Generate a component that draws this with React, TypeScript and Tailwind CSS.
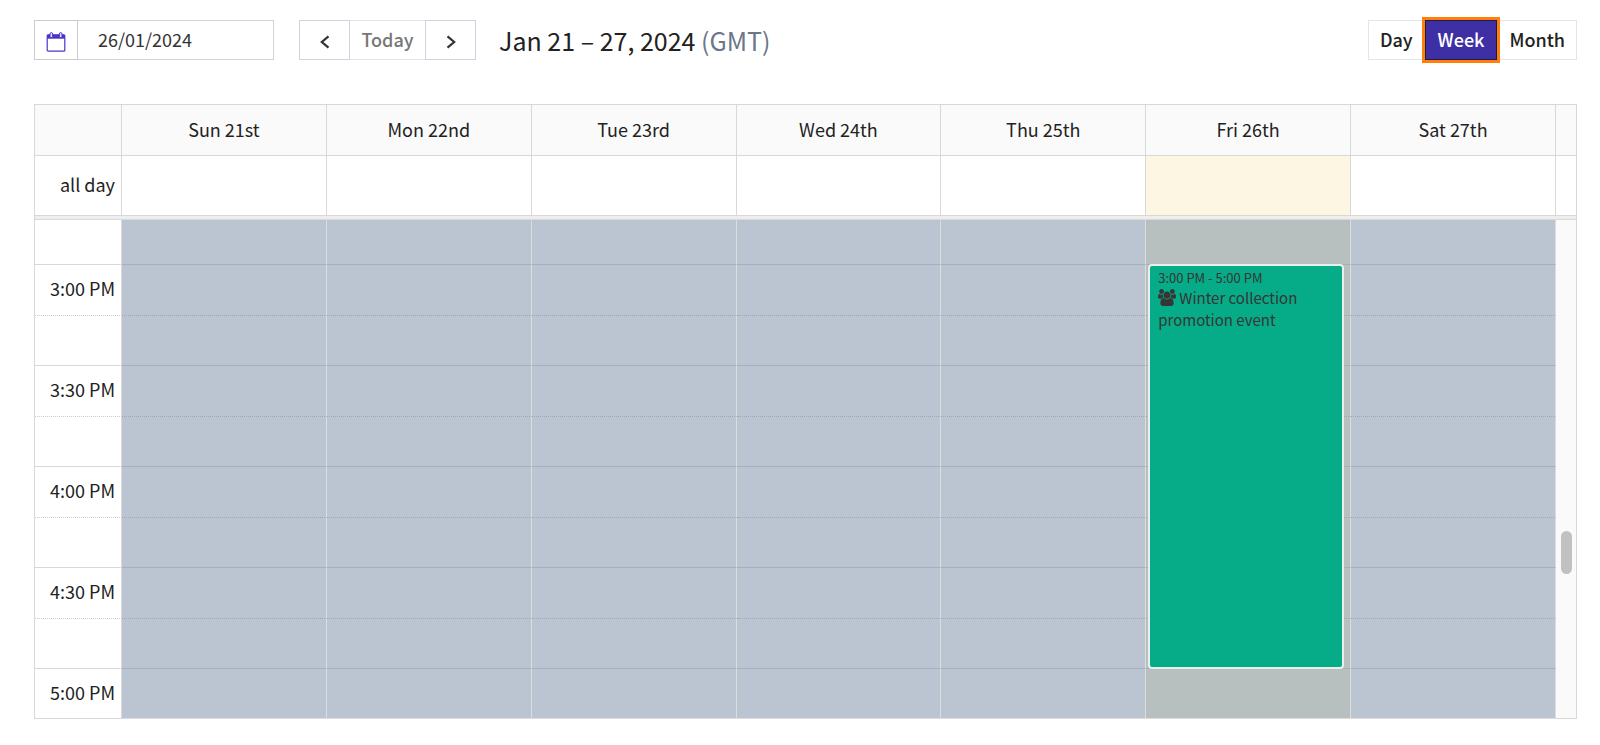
import React, { useState } from 'react';

type View = 'Day' | 'Week' | 'Month';

const views: View[] = ['Day', 'Week', 'Month'];

const days = [
  { label: 'Sun 21st', today: false },
  { label: 'Mon 22nd', today: false },
  { label: 'Tue 23rd', today: false },
  { label: 'Wed 24th', today: false },
  { label: 'Thu 25th', today: false },
  { label: 'Fri 26th', today: true },
  { label: 'Sat 27th', today: false },
];

const times = ['3:00 PM', '3:30 PM', '4:00 PM', '4:30 PM'];

const CalendarIcon = () => (
  <svg viewBox="0 0 20 20" className="mt-1 size-5" fill="none" stroke="currentColor" aria-hidden="true">
    <rect x="1.2" y="2.8" width="17.6" height="16.4" rx="1" strokeWidth="1.2" />
    <path d="M1.2 2.8h17.6v3.9H1.2z" fill="currentColor" stroke="none" />
    <rect x="4" y="0.6" width="2.600" height="5" rx="1.300" fill="#e4e1fa" strokeWidth="1" />
    <rect x="13.400" y="0.600" width="2.600" height="5" rx="1.300" fill="#e4e1fa" strokeWidth="1" />
  </svg>
);

const ChevronIcon = ({ direction }: { direction: 'left' | 'right' }) => (
  <svg viewBox="0 0 12 14" className="mt-[3px] h-3.5 w-3" fill="none" stroke="currentColor" strokeWidth="2.2" aria-hidden="true">
    <path d={direction === 'left' ? 'M9.500 1.300 2.800 7l6.700 5.700' : 'M2.500 1.300 9.200 7l-6.700 5.700'} />
  </svg>
);

const UsersIcon = () => (
  <svg viewBox="0 0 1920 1792" className="mr-[3px] inline-block h-[17px] w-[18px] align-[-2px]" fill="currentColor" aria-hidden="true">
    <path d="M593 896q-162 5-265 128h-134q-82 0-138-40.5t-56-118.5q0-353 124-353 6 0 43.5 21t97.5 42.5 119 21.5q67 0 133-23-5 37-5 66 0 139 81 256zm1071 637q0 120-73 189.5t-194 69.5h-874q-121 0-194-69.5t-73-189.5q0-53 3.5-103.5t14-109 26.5-108.5 43-97.5 62-81 85.5-53.5 111.5-20q10 0 43 21.5t73 48 107 48 135 21.5 135-21.5 107-48 73-48 43-21.5q61 0 111.5 20t85.5 53.5 62 81 43 97.5 26.5 108.5 14 109 3.5 103.5zm-1024-1277q0 106-75 181t-181 75-181-75-75-181 75-181 181-75 181 75 75 181zm704 384q0 159-112.5 271.5t-271.5 112.5-271.5-112.5-112.5-271.5 112.5-271.5 271.5-112.5 271.5 112.5 112.5 271.5zm576 225q0 78-56 118.5t-138 40.5h-134q-103-123-265-128 81-117 81-256 0-29-5-66 66 23 133 23 59 0 119-21.5t97.5-42.5 43.5-21q124 0 124 353zm-128-609q0 106-75 181t-181 75-181-75-75-181 75-181 181-75 181 75 75 181z" />
  </svg>
);

const EventCard = () => (
  <button
    type="button"
    className="absolute -top-px right-[6px] left-[2px] flex h-[405px] flex-col items-start rounded-[4px] border-2 border-[#e8efed] bg-[#06ab87] px-2 pt-[3px] text-left text-[#363636]"
  >
    <span className="text-[13px] leading-[18px]">3:00 PM - 5:00 PM</span>
    <span className="text-[15px] leading-[22px]">
      <UsersIcon />
      Winter collection promotion event
    </span>
  </button>
);

type SlotCellsProps = { dotted?: boolean; withEvent?: boolean; last?: boolean };

const SlotCells = ({ dotted = false, withEvent = false, last = false }: SlotCellsProps) => (
  <>
    {days.map((day) => (
      <td
        key={day.label}
        className={`border-r border-b border-r-[#ddd] p-0 ${withEvent && day.today ? 'relative z-10' : ''} ${
          dotted ? 'border-b-[#9aa8b7] [border-bottom-style:dotted]' : last ? 'border-b-[#ddd]' : 'border-b-[#a3b0be]'
        } ${day.today ? 'bg-[#b7c0be]' : 'bg-[#bac5d1]'}`}
      >
        {withEvent && day.today && <EventCard />}
      </td>
    ))}
  </>
);

const App: React.FC = () => {
  const [view, setView] = useState<View>('Week');
  const [date, setDate] = useState<string>('26/01/2024');

  return (
    <main className="bg-white pt-5 pr-[23px] pb-6 pl-[34px] font-['Noto_Sans_CJK_JP','Noto_Sans_CJK_SC',sans-serif] text-lg text-[#222]">
      {/* Toolbar */}
      <div className="flex h-10 items-stretch">
        <div className="flex w-60">
          <button
            type="button"
            aria-label="Open calendar"
            className="flex w-11 items-center justify-center border border-[#ccc] text-[#4a35c8]"
          >
            <CalendarIcon />
          </button>
          <input
            type="text"
            aria-label="Date"
            value={date}
            onChange={(e) => setDate(e.target.value)}
            className="min-w-0 flex-1 border border-l-0 border-[#cdd3df] px-5 pb-0.5 text-lg leading-6 text-[#333]"
          />
        </div>

        <div className="ml-[25px] flex">
          <button
            type="button"
            aria-label="Previous week"
            className="flex w-[51px] items-center justify-center border border-[#cdd3df] text-[#333]"
          >
            <ChevronIcon direction="left" />
          </button>
          <button type="button" className="w-[75px] border-y border-[#e2e5ec] pb-0.5 text-lg leading-6 font-medium text-[#777]">
            Today
          </button>
          <button
            type="button"
            aria-label="Next week"
            className="flex w-[51px] items-center justify-center border border-[#cdd3df] text-[#333]"
          >
            <ChevronIcon direction="right" />
          </button>
        </div>

        <h1 className="ml-[23px] text-[25px] leading-10">
          Jan 21 – 27, 2024 <span className="text-[#6b7688]">(GMT)</span>
        </h1>

        {/* View switcher */}
        <div className="ml-auto flex">
          {views.map((name) => (
            <button
              key={name}
              type="button"
              onClick={() => setView(name)}
              className={`border pb-0.5 text-lg leading-6 font-medium ${
                name === view
                  ? 'relative px-3 border-[#1c1c4a] bg-[#3f2fa5] text-white outline-3 outline-[#ff7f0a]'
                  : 'border-[#e3e5e8] px-[11px]'
              }`}
            >
              {name}
            </button>
          ))}
        </div>
      </div>

      {/* Week grid */}
      <table className="mt-11 w-full table-fixed border-separate border-spacing-0 border-t border-l border-[#d8d8d8]">
        <colgroup>
          <col className="w-[87px]" />
          {days.map((day) => (
            <col key={day.label} />
          ))}
          <col className="w-[21px]" />
        </colgroup>
        <thead>
          <tr className="h-[51px] bg-[#fafafa]">
            <td className="border-r border-b border-[#d8d8d8] p-0" />
            {days.map((day) => (
              <th key={day.label} scope="col" className="border-r border-b border-[#d8d8d8] p-0 pb-0.5 leading-6 font-normal">
                {day.label}
              </th>
            ))}
            <td className="border-r border-b border-[#d8d8d8] p-0" />
          </tr>
          <tr className="h-[60px]">
            <th scope="row" className="border-r border-b border-[#d8d8d8] p-0 pr-1.5 pb-1 text-right leading-6 font-normal">
              all day
            </th>
            {days.map((day) => (
              <td key={day.label} className={`border-r border-b border-[#d8d8d8] p-0 ${day.today ? 'bg-[#fdf6e3]' : ''}`} />
            ))}
            <td className="border-r border-b border-[#d8d8d8] p-0" />
          </tr>
        </thead>
        <tbody>
          <tr className="h-1">
            <td colSpan={9} className="border-r border-b border-[#d8d8d8] bg-[#eee] p-0" />
          </tr>
          <tr className="h-[45px]">
            <td className="border-r border-b border-[#d8d8d8] p-0" />
            <SlotCells />
            {/* Scroll rail */}
            <td rowSpan={10} className="relative border-r border-b border-[#d8d8d8] bg-[#fafafa] p-0">
              <div className="absolute top-[311px] right-1 h-[43px] w-[11px] rounded-full bg-[#c1c1c1]" />
            </td>
          </tr>
          {times.map((time, i) => (
            <React.Fragment key={time}>
              <tr className="h-[51px]">
                <th
                  scope="row"
                  className="border-r border-b border-[#d8d8d8] border-b-[#ccc] p-0 pr-1.5 pb-1 text-right leading-6 font-normal [border-bottom-style:dotted]"
                >
                  {time}
                </th>
                <SlotCells dotted withEvent={i === 0} />
              </tr>
              <tr className="h-[50px]">
                <td className="border-r border-b border-[#d8d8d8] p-0" />
                <SlotCells />
              </tr>
            </React.Fragment>
          ))}
          <tr className="h-[50px]">
            <th scope="row" className="border-r border-b border-[#d8d8d8] p-0 pr-1.5 pb-1 text-right leading-6 font-normal">
              5:00 PM
            </th>
            <SlotCells last />
          </tr>
        </tbody>
      </table>
    </main>
  );
};

export default App;
